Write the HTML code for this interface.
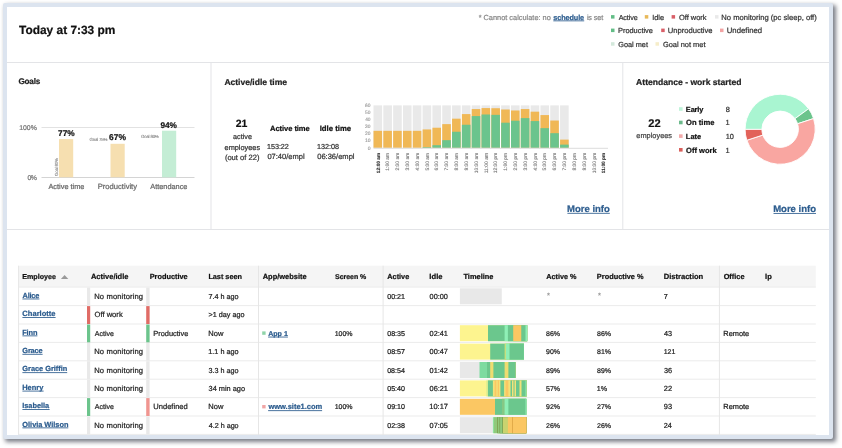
<!DOCTYPE html>
<html><head><meta charset="utf-8"><title>Dashboard</title>
<style>
html,body{margin:0;padding:0;background:#fff;}
body{width:842px;height:448px;overflow:hidden;position:relative;font-family:"Liberation Sans", sans-serif;}
#frame{position:absolute;left:3px;top:3px;width:822px;height:428px;border:4px solid #dce4ef;border-radius:2px;background:#fff;box-shadow:2.5px 2.5px 4px 0 rgba(30,35,50,0.58);}
#c{position:absolute;left:0;top:0;width:833px;height:435px;overflow:hidden;}
#c div,#c svg{position:absolute;}
#s{left:0;top:0;width:842px;height:448px;}
#t{will-change:transform;left:0;top:0;width:842px;height:448px;font-family:"Liberation Sans", sans-serif;text-rendering:geometricPrecision;}
#t text{white-space:pre;}
</style></head><body>
<div id="frame"></div>
<div id="c">
<svg id="s" viewBox="0 0 842 448">
<rect x="611.00" y="15.10" width="3.50" height="3.50" fill="#62bd86"/>
<rect x="644.80" y="15.10" width="3.50" height="3.50" fill="#e8b95a"/>
<rect x="671.60" y="15.10" width="3.50" height="3.50" fill="#d95f68"/>
<rect x="715.00" y="15.10" width="3.50" height="3.50" fill="#e9e9e9"/>
<rect x="611.00" y="28.60" width="3.50" height="3.50" fill="#62bd86"/>
<rect x="661.20" y="28.60" width="3.50" height="3.50" fill="#d95f68"/>
<rect x="720.00" y="28.60" width="3.50" height="3.50" fill="#f2a3a3"/>
<rect x="611.00" y="42.20" width="3.50" height="3.50" fill="#d3e8db"/>
<rect x="655.50" y="42.20" width="3.50" height="3.50" fill="#f6edc9"/>
<rect x="7.00" y="62.00" width="822.00" height="1.00" fill="#e3e4e7"/>
<rect x="7.00" y="229.00" width="822.00" height="1.00" fill="#e3e4e7"/>
<rect x="210.50" y="62.00" width="1.00" height="167.00" fill="#e3e4e7"/>
<rect x="622.30" y="62.00" width="1.00" height="167.00" fill="#e3e4e7"/>
<rect x="41.50" y="127.00" width="153.00" height="1.00" fill="#e2e2e2"/>
<rect x="41.50" y="177.00" width="153.00" height="1.00" fill="#d4d4d4"/>
<rect x="59.00" y="139.10" width="14.20" height="38.20" fill="#f6dfb0"/>
<rect x="110.50" y="143.80" width="14.20" height="33.50" fill="#f6dfb0"/>
<rect x="162.00" y="130.70" width="14.20" height="46.60" fill="#c4edd5"/>
<rect x="373.50" y="105.38" width="8.60" height="42.42" fill="#e9e9e9"/>
<rect x="373.50" y="130.83" width="8.60" height="16.97" fill="#f0b856"/>
<rect x="383.32" y="105.38" width="8.60" height="42.42" fill="#e9e9e9"/>
<rect x="383.32" y="130.83" width="8.60" height="16.97" fill="#f0b856"/>
<rect x="393.14" y="105.38" width="8.60" height="42.42" fill="#e9e9e9"/>
<rect x="393.14" y="130.83" width="8.60" height="16.97" fill="#f0b856"/>
<rect x="402.96" y="105.38" width="8.60" height="42.42" fill="#e9e9e9"/>
<rect x="402.96" y="130.83" width="8.60" height="16.97" fill="#f0b856"/>
<rect x="412.78" y="105.38" width="8.60" height="42.42" fill="#e9e9e9"/>
<rect x="412.78" y="130.83" width="8.60" height="16.97" fill="#f0b856"/>
<rect x="422.60" y="105.38" width="8.60" height="42.42" fill="#e9e9e9"/>
<rect x="422.60" y="129.42" width="8.60" height="18.38" fill="#f0b856"/>
<rect x="422.60" y="147.09" width="8.60" height="0.71" fill="#6bc48d"/>
<rect x="432.42" y="105.38" width="8.60" height="42.42" fill="#e9e9e9"/>
<rect x="432.42" y="127.72" width="8.60" height="20.08" fill="#f0b856"/>
<rect x="432.42" y="145.18" width="8.60" height="2.62" fill="#6bc48d"/>
<rect x="442.24" y="105.38" width="8.60" height="42.42" fill="#e9e9e9"/>
<rect x="442.24" y="124.12" width="8.60" height="23.68" fill="#f0b856"/>
<rect x="442.24" y="140.16" width="8.60" height="7.64" fill="#6bc48d"/>
<rect x="452.06" y="105.38" width="8.60" height="42.42" fill="#e9e9e9"/>
<rect x="452.06" y="118.67" width="8.60" height="29.13" fill="#f0b856"/>
<rect x="452.06" y="131.75" width="8.60" height="16.05" fill="#6bc48d"/>
<rect x="461.88" y="105.38" width="8.60" height="42.42" fill="#e9e9e9"/>
<rect x="461.88" y="114.08" width="8.60" height="33.72" fill="#f0b856"/>
<rect x="461.88" y="124.75" width="8.60" height="23.05" fill="#6bc48d"/>
<rect x="471.70" y="105.38" width="8.60" height="42.42" fill="#e9e9e9"/>
<rect x="471.70" y="109.06" width="8.60" height="38.74" fill="#f0b856"/>
<rect x="471.70" y="116.06" width="8.60" height="31.74" fill="#6bc48d"/>
<rect x="481.52" y="105.38" width="8.60" height="42.42" fill="#e9e9e9"/>
<rect x="481.52" y="108.07" width="8.60" height="39.73" fill="#f0b856"/>
<rect x="481.52" y="114.50" width="8.60" height="33.30" fill="#6bc48d"/>
<rect x="491.34" y="105.38" width="8.60" height="42.42" fill="#e9e9e9"/>
<rect x="491.34" y="108.21" width="8.60" height="39.59" fill="#f0b856"/>
<rect x="491.34" y="114.85" width="8.60" height="32.95" fill="#6bc48d"/>
<rect x="501.16" y="105.38" width="8.60" height="42.42" fill="#e9e9e9"/>
<rect x="501.16" y="109.48" width="8.60" height="38.32" fill="#f0b856"/>
<rect x="501.16" y="122.70" width="8.60" height="25.10" fill="#6bc48d"/>
<rect x="510.98" y="105.38" width="8.60" height="42.42" fill="#e9e9e9"/>
<rect x="510.98" y="110.47" width="8.60" height="37.33" fill="#f0b856"/>
<rect x="510.98" y="120.72" width="8.60" height="27.08" fill="#6bc48d"/>
<rect x="520.80" y="105.38" width="8.60" height="42.42" fill="#e9e9e9"/>
<rect x="520.80" y="109.06" width="8.60" height="38.74" fill="#f0b856"/>
<rect x="520.80" y="118.11" width="8.60" height="29.69" fill="#6bc48d"/>
<rect x="530.62" y="105.38" width="8.60" height="42.42" fill="#e9e9e9"/>
<rect x="530.62" y="111.67" width="8.60" height="36.13" fill="#f0b856"/>
<rect x="530.62" y="121.08" width="8.60" height="26.72" fill="#6bc48d"/>
<rect x="540.44" y="105.38" width="8.60" height="42.42" fill="#e9e9e9"/>
<rect x="540.44" y="115.07" width="8.60" height="32.73" fill="#f0b856"/>
<rect x="540.44" y="128.15" width="8.60" height="19.65" fill="#6bc48d"/>
<rect x="550.26" y="105.38" width="8.60" height="42.42" fill="#e9e9e9"/>
<rect x="550.26" y="120.51" width="8.60" height="27.29" fill="#f0b856"/>
<rect x="550.26" y="133.17" width="8.60" height="14.63" fill="#6bc48d"/>
<rect x="560.08" y="105.38" width="8.60" height="42.42" fill="#e9e9e9"/>
<rect x="560.08" y="139.60" width="8.60" height="8.20" fill="#f0b856"/>
<rect x="560.08" y="144.62" width="8.60" height="3.18" fill="#6bc48d"/>
<rect x="373.50" y="147.80" width="234.50" height="1.00" fill="#dcdcdc"/>
<rect x="679.00" y="107.20" width="3.60" height="3.60" fill="#bff3d9"/>
<rect x="679.00" y="120.70" width="3.60" height="3.60" fill="#6cba8c"/>
<rect x="679.00" y="134.30" width="3.60" height="3.60" fill="#f3aaaa"/>
<rect x="679.00" y="148.00" width="3.60" height="3.60" fill="#d9605c"/>
<path d="M745.10 129.40A35.1 35.1 0 0 1 808.60 108.77L795.01 118.64A18.3 18.3 0 0 0 761.90 129.40Z" fill="#a9f5d1" stroke="#fff" stroke-width="0.9"/><path d="M808.60 108.77A35.1 35.1 0 0 1 813.58 118.55L797.60 123.74A18.3 18.3 0 0 0 795.01 118.64Z" fill="#6cc48c" stroke="#fff" stroke-width="0.9"/><path d="M813.58 118.55A35.1 35.1 0 0 1 746.82 140.25L762.80 135.06A18.3 18.3 0 0 0 797.60 123.74Z" fill="#f9a6a1" stroke="#fff" stroke-width="0.9"/><path d="M746.82 140.25A35.1 35.1 0 0 1 745.10 129.40L761.90 129.40A18.3 18.3 0 0 0 762.80 135.06Z" fill="#e2625a" stroke="#fff" stroke-width="0.9"/>
<rect x="18.60" y="265.70" width="797.20" height="21.40" fill="#f5f5f5"/>
<rect x="18.60" y="286.60" width="797.20" height="1.00" fill="#ebebeb"/>
<rect x="18.60" y="305.10" width="797.20" height="1.00" fill="#ebebeb"/>
<rect x="18.60" y="323.50" width="797.20" height="1.00" fill="#ebebeb"/>
<rect x="18.60" y="341.90" width="797.20" height="1.00" fill="#ebebeb"/>
<rect x="18.60" y="360.30" width="797.20" height="1.00" fill="#ebebeb"/>
<rect x="18.60" y="378.70" width="797.20" height="1.00" fill="#ebebeb"/>
<rect x="18.60" y="397.10" width="797.20" height="1.00" fill="#ebebeb"/>
<rect x="18.60" y="415.50" width="797.20" height="1.00" fill="#ebebeb"/>
<rect x="18.60" y="433.90" width="797.20" height="1.00" fill="#ebebeb"/>
<rect x="18.10" y="265.70" width="1.00" height="170.00" fill="#e6e6e6"/>
<rect x="258.00" y="265.70" width="1.00" height="170.00" fill="#e6e6e6"/>
<rect x="382.60" y="265.70" width="1.00" height="170.00" fill="#e6e6e6"/>
<rect x="718.90" y="265.70" width="1.00" height="170.00" fill="#e6e6e6"/>
<path d="M60.9 278.9L64.6 274.9L68.3 278.9Z" fill="#9a9a9a"/>
<rect x="87.00" y="287.60" width="3.20" height="18.00" fill="#e9e9e9"/>
<rect x="146.20" y="287.60" width="3.40" height="18.00" fill="#e9e9e9"/>
<rect x="459.90" y="288.30" width="41.85" height="16.00" fill="#e8e8e8"/>
<rect x="87.00" y="306.10" width="3.20" height="17.90" fill="#e06c66"/>
<rect x="146.20" y="306.10" width="3.40" height="17.90" fill="#e06c66"/>
<rect x="87.00" y="324.50" width="3.20" height="17.90" fill="#6cc48c"/>
<rect x="146.20" y="324.50" width="3.40" height="17.90" fill="#6cc48c"/>
<rect x="262.20" y="331.40" width="3.40" height="3.40" fill="#8fd4a8"/>
<rect x="459.90" y="325.20" width="67.30" height="16.00" fill="#fdf48f"/>
<rect x="488.00" y="325.20" width="39.20" height="16.00" fill="#6bc78d"/>
<rect x="504.60" y="325.20" width="22.60" height="16.00" fill="#8ff0b6"/>
<rect x="507.90" y="325.20" width="19.30" height="16.00" fill="#6bc78d"/>
<rect x="513.20" y="325.20" width="14.00" height="16.00" fill="#fbc763"/>
<rect x="521.25" y="325.20" width="5.95" height="16.00" fill="#6bc78d"/>
<rect x="525.50" y="325.20" width="1.70" height="16.00" fill="#8ff0b6"/>
<rect x="87.00" y="342.90" width="3.20" height="17.90" fill="#e9e9e9"/>
<rect x="146.20" y="342.90" width="3.40" height="17.90" fill="#e9e9e9"/>
<rect x="459.90" y="343.60" width="64.00" height="16.00" fill="#fdf48f"/>
<rect x="490.20" y="343.60" width="33.70" height="16.00" fill="#6bc78d"/>
<rect x="504.60" y="343.60" width="19.30" height="16.00" fill="#c5e07e"/>
<rect x="506.00" y="343.60" width="17.90" height="16.00" fill="#8ff0b6"/>
<rect x="509.50" y="343.60" width="14.40" height="16.00" fill="#6bc78d"/>
<rect x="87.00" y="361.30" width="3.20" height="17.90" fill="#e9e9e9"/>
<rect x="146.20" y="361.30" width="3.40" height="17.90" fill="#e9e9e9"/>
<rect x="459.90" y="362.00" width="55.70" height="16.00" fill="#e8e8e8"/>
<rect x="479.50" y="362.00" width="36.10" height="16.00" fill="#7ddba0"/>
<rect x="487.00" y="362.00" width="28.60" height="16.00" fill="#6bc78d"/>
<rect x="490.20" y="362.00" width="25.40" height="16.00" fill="#f0dc70"/>
<rect x="493.40" y="362.00" width="22.20" height="16.00" fill="#6bc78d"/>
<rect x="504.60" y="362.00" width="11.00" height="16.00" fill="#f0dc70"/>
<rect x="508.40" y="362.00" width="7.20" height="16.00" fill="#6bc78d"/>
<rect x="87.00" y="379.70" width="3.20" height="17.90" fill="#e9e9e9"/>
<rect x="146.20" y="379.70" width="3.40" height="17.90" fill="#e9e9e9"/>
<rect x="459.90" y="380.40" width="66.40" height="16.00" fill="#fdf48f"/>
<rect x="486.40" y="380.40" width="39.90" height="16.00" fill="#d8ec90"/>
<rect x="488.00" y="380.40" width="38.30" height="16.00" fill="#6bc78d"/>
<rect x="492.90" y="380.40" width="33.40" height="16.00" fill="#f3e27a"/>
<rect x="494.60" y="380.40" width="31.70" height="16.00" fill="#fbc763"/>
<rect x="496.30" y="380.40" width="30.00" height="16.00" fill="#f3e27a"/>
<rect x="497.70" y="380.40" width="28.60" height="16.00" fill="#fbc763"/>
<rect x="499.00" y="380.40" width="27.30" height="16.00" fill="#f3e27a"/>
<rect x="500.40" y="380.40" width="25.90" height="16.00" fill="#6bc78d"/>
<rect x="504.10" y="380.40" width="22.20" height="16.00" fill="#f3e27a"/>
<rect x="505.50" y="380.40" width="20.80" height="16.00" fill="#fbc763"/>
<rect x="508.40" y="380.40" width="17.90" height="16.00" fill="#f3e27a"/>
<rect x="510.50" y="380.40" width="15.80" height="16.00" fill="#6bc78d"/>
<rect x="512.00" y="380.40" width="14.30" height="16.00" fill="#f3e27a"/>
<rect x="513.50" y="380.40" width="12.80" height="16.00" fill="#6bc78d"/>
<rect x="514.50" y="380.40" width="11.80" height="16.00" fill="#f3e27a"/>
<rect x="516.00" y="380.40" width="10.30" height="16.00" fill="#6bc78d"/>
<rect x="519.50" y="380.40" width="6.80" height="16.00" fill="#f3e27a"/>
<rect x="521.50" y="380.40" width="4.80" height="16.00" fill="#6bc78d"/>
<rect x="525.50" y="380.40" width="0.80" height="16.00" fill="#8ff0b6"/>
<rect x="87.00" y="398.10" width="3.20" height="17.90" fill="#6cc48c"/>
<rect x="146.20" y="398.10" width="3.40" height="17.90" fill="#f09590"/>
<rect x="262.20" y="405.00" width="3.40" height="3.40" fill="#f0a5a5"/>
<rect x="459.90" y="398.80" width="66.40" height="16.00" fill="#fbc763"/>
<rect x="495.00" y="398.80" width="31.30" height="16.00" fill="#6bc78d"/>
<rect x="502.00" y="398.80" width="24.30" height="16.00" fill="#86c884"/>
<rect x="504.60" y="398.80" width="21.70" height="16.00" fill="#8ff0b6"/>
<rect x="508.40" y="398.80" width="17.90" height="16.00" fill="#6bc78d"/>
<rect x="525.50" y="398.80" width="0.80" height="16.00" fill="#8ff0b6"/>
<rect x="87.00" y="416.50" width="3.20" height="17.90" fill="#e9e9e9"/>
<rect x="146.20" y="416.50" width="3.40" height="17.90" fill="#e9e9e9"/>
<rect x="459.90" y="417.20" width="66.40" height="16.00" fill="#e8e8e8"/>
<rect x="492.90" y="417.20" width="33.40" height="16.00" fill="#8ff0b6"/>
<rect x="493.60" y="417.20" width="32.70" height="16.00" fill="#8fc97b"/>
<rect x="497.10" y="417.20" width="29.20" height="16.00" fill="#7a9a4a"/>
<rect x="497.80" y="417.20" width="28.50" height="16.00" fill="#8fc97b"/>
<rect x="499.50" y="417.20" width="26.80" height="16.00" fill="#7a9a4a"/>
<rect x="500.10" y="417.20" width="26.20" height="16.00" fill="#8fc97b"/>
<rect x="502.30" y="417.20" width="24.00" height="16.00" fill="#7a9a4a"/>
<rect x="503.00" y="417.20" width="23.30" height="16.00" fill="#c9d36f"/>
<rect x="507.90" y="417.20" width="18.40" height="16.00" fill="#fbc763"/>
<rect x="512.10" y="417.20" width="14.20" height="16.00" fill="#d9a040"/>
<rect x="512.80" y="417.20" width="13.50" height="16.00" fill="#fbc763"/>
</svg>
<svg id="t" viewBox="0 0 842 448">
<text x="19.03" y="34.30" font-size="11.91" fill="#111" letter-spacing="0.001" font-weight="700" stroke="#111" stroke-width="0.22">Today at 7:33 pm</text>
<text x="478.64" y="19.60" font-size="7.38" fill="#888" stroke="#888" stroke-width="0.22">* Cannot calculate: no</text>
<text x="553.29" y="19.60" font-size="7.29" fill="#2c5c8e" letter-spacing="-0.103" font-weight="700" stroke="#2c5c8e" stroke-width="0.22">schedule</text>
<rect x="553.30" y="20.43" width="30.90" height="0.85" fill="#2c5c8e"/>
<text x="586.88" y="19.60" font-size="7.29" fill="#888" letter-spacing="-0.144" stroke="#888" stroke-width="0.22">is set</text>
<text x="618.65" y="19.50" font-size="7.19" fill="#333" letter-spacing="-0.117" stroke="#333" stroke-width="0.22">Active</text>
<text x="652.19" y="19.50" font-size="7.36" fill="#333" stroke="#333" stroke-width="0.22">Idle</text>
<text x="678.91" y="19.50" font-size="7.48" fill="#333" letter-spacing="-0.002" stroke="#333" stroke-width="0.22">Off work</text>
<text x="721.34" y="19.50" font-size="7.61" fill="#333" stroke="#333" stroke-width="0.22">No monitoring (pc sleep, off)</text>
<text x="618.06" y="33.00" font-size="7.39" fill="#333" letter-spacing="-0.002" stroke="#333" stroke-width="0.22">Productive</text>
<text x="667.68" y="33.00" font-size="7.64" fill="#333" letter-spacing="-0.003" stroke="#333" stroke-width="0.22">Unproductive</text>
<text x="726.77" y="33.00" font-size="7.76" fill="#333" letter-spacing="-0.003" stroke="#333" stroke-width="0.22">Undefined</text>
<text x="618.28" y="46.60" font-size="7.32" fill="#333" letter-spacing="-0.002" stroke="#333" stroke-width="0.22">Goal met</text>
<text x="662.88" y="46.60" font-size="7.44" fill="#333" stroke="#333" stroke-width="0.22">Goal not met</text>
<text x="18.42" y="84.40" font-size="8.18" fill="#222" letter-spacing="-0.202" font-weight="700" stroke="#222" stroke-width="0.22">Goals</text>
<text x="19.33" y="129.60" font-size="6.89" fill="#777" letter-spacing="-0.057" stroke="#777" stroke-width="0.22">100%</text>
<text x="27.46" y="180.00" font-size="6.89" fill="#777" letter-spacing="-0.482" stroke="#777" stroke-width="0.22">0%</text>
<text x="58.12" y="135.70" font-size="8.31" fill="#111" font-weight="700" stroke="#111" stroke-width="0.22">77%</text>
<text x="109.05" y="140.30" font-size="8.45" fill="#111" letter-spacing="0.094" font-weight="700" stroke="#111" stroke-width="0.22">67%</text>
<text x="160.40" y="127.50" font-size="8.27" fill="#111" letter-spacing="-0.002" font-weight="700" stroke="#111" stroke-width="0.22">94%</text>
<text x="89.43" y="141.20" font-size="4.43" fill="#888" letter-spacing="-0.183" stroke="#888" stroke-width="0.12">Goal 75%</text>
<text x="140.93" y="137.80" font-size="4.43" fill="#888" letter-spacing="-0.212" stroke="#888" stroke-width="0.12">Goal 80%</text>
<text transform="translate(58.20 175.75) rotate(-90)" x="-0.22" y="0" font-size="4.43" fill="#888" letter-spacing="-0.226" stroke="#888" stroke-width="0.12">Goal 80%</text>
<text x="48.45" y="188.90" font-size="7.39" fill="#666" letter-spacing="-0.003" stroke="#666" stroke-width="0.22">Active time</text>
<text x="97.74" y="188.90" font-size="7.61" fill="#666" letter-spacing="-0.002" stroke="#666" stroke-width="0.22">Productivity</text>
<text x="150.25" y="188.90" font-size="7.39" fill="#666" letter-spacing="-0.010" stroke="#666" stroke-width="0.22">Attendance</text>
<text x="224.38" y="84.50" font-size="8.54" fill="#222" font-weight="700" stroke="#222" stroke-width="0.22">Active/idle time</text>
<text x="235.73" y="126.90" font-size="10.51" fill="#111" font-weight="700" stroke="#111" stroke-width="0.22">21</text>
<text x="233.06" y="138.50" font-size="7.23" fill="#333" stroke="#333" stroke-width="0.22">active</text>
<text x="224.56" y="149.50" font-size="7.37" fill="#333" letter-spacing="0.001" stroke="#333" stroke-width="0.22">employees</text>
<text x="224.89" y="160.20" font-size="7.59" fill="#333" stroke="#333" stroke-width="0.22">(out of 22)</text>
<text x="270.10" y="131.40" font-size="7.58" fill="#111" letter-spacing="-0.080" font-weight="700" stroke="#111" stroke-width="0.22">Active time</text>
<text x="319.65" y="131.40" font-size="7.75" fill="#111" font-weight="700" stroke="#111" stroke-width="0.22">Idle time</text>
<text x="267.11" y="148.70" font-size="7.19" fill="#333" letter-spacing="-0.064" stroke="#333" stroke-width="0.22">153:22</text>
<text x="316.90" y="148.70" font-size="7.27" fill="#333" letter-spacing="0.002" stroke="#333" stroke-width="0.22">132:08</text>
<text x="267.39" y="159.40" font-size="7.52" fill="#333" letter-spacing="0.003" stroke="#333" stroke-width="0.22">07:40/empl</text>
<text x="317.19" y="159.40" font-size="7.55" fill="#333" letter-spacing="-0.002" stroke="#333" stroke-width="0.22">06:36/empl</text>
<text x="367.76" y="149.50" font-size="5.0" fill="#999" stroke="#999" stroke-width="0.12">0</text>
<text x="364.88" y="142.43" font-size="4.99" fill="#999" letter-spacing="0.004" stroke="#999" stroke-width="0.12">10</text>
<text x="365.01" y="135.36" font-size="4.87" fill="#999" letter-spacing="0.003" stroke="#999" stroke-width="0.12">20</text>
<text x="365.08" y="128.29" font-size="4.83" fill="#999" letter-spacing="-0.029" stroke="#999" stroke-width="0.12">30</text>
<text x="365.15" y="121.22" font-size="4.83" fill="#999" letter-spacing="-0.101" stroke="#999" stroke-width="0.12">40</text>
<text x="365.06" y="114.15" font-size="4.83" fill="#999" letter-spacing="-0.005" stroke="#999" stroke-width="0.12">50</text>
<text x="365.01" y="107.08" font-size="4.87" fill="#999" letter-spacing="0.003" stroke="#999" stroke-width="0.12">60</text>
<text transform="translate(379.50 172.95) rotate(-90)" x="-0.29" y="0" font-size="4.83" fill="#333" letter-spacing="-0.029" font-weight="700" stroke="#333" stroke-width="0.12">12:00 am</text>
<text transform="translate(389.32 170.35) rotate(-90)" x="-0.37" y="0" font-size="4.98" fill="#777" letter-spacing="-0.001" stroke="#777" stroke-width="0.12">1:00 am</text>
<text transform="translate(399.14 170.35) rotate(-90)" x="-0.25" y="0" font-size="4.94" fill="#777" letter-spacing="0.001" stroke="#777" stroke-width="0.12">2:00 am</text>
<text transform="translate(408.96 170.35) rotate(-90)" x="-0.17" y="0" font-size="4.92" fill="#777" stroke="#777" stroke-width="0.12">3:00 am</text>
<text transform="translate(418.78 170.35) rotate(-90)" x="-0.10" y="0" font-size="4.9" fill="#777" stroke="#777" stroke-width="0.12">4:00 am</text>
<text transform="translate(428.60 170.35) rotate(-90)" x="-0.20" y="0" font-size="4.93" fill="#777" stroke="#777" stroke-width="0.12">5:00 am</text>
<text transform="translate(438.42 170.35) rotate(-90)" x="-0.25" y="0" font-size="4.94" fill="#777" letter-spacing="0.001" stroke="#777" stroke-width="0.12">6:00 am</text>
<text transform="translate(448.24 170.35) rotate(-90)" x="-0.25" y="0" font-size="4.94" fill="#777" letter-spacing="0.001" stroke="#777" stroke-width="0.12">7:00 am</text>
<text transform="translate(458.06 170.35) rotate(-90)" x="-0.20" y="0" font-size="4.93" fill="#777" stroke="#777" stroke-width="0.12">8:00 am</text>
<text transform="translate(467.88 170.35) rotate(-90)" x="-0.22" y="0" font-size="4.94" fill="#777" letter-spacing="-0.003" stroke="#777" stroke-width="0.12">9:00 am</text>
<text transform="translate(477.70 172.95) rotate(-90)" x="-0.37" y="0" font-size="4.94" fill="#777" letter-spacing="-0.002" stroke="#777" stroke-width="0.12">10:00 am</text>
<text transform="translate(487.52 172.95) rotate(-90)" x="-0.38" y="0" font-size="5.03" fill="#777" stroke="#777" stroke-width="0.12">11:00 am</text>
<text transform="translate(497.34 172.95) rotate(-90)" x="-0.37" y="0" font-size="4.94" fill="#777" letter-spacing="-0.002" stroke="#777" stroke-width="0.12">12:00 pm</text>
<text transform="translate(507.16 170.35) rotate(-90)" x="-0.37" y="0" font-size="4.98" fill="#777" letter-spacing="-0.001" stroke="#777" stroke-width="0.12">1:00 pm</text>
<text transform="translate(516.98 170.35) rotate(-90)" x="-0.25" y="0" font-size="4.94" fill="#777" letter-spacing="0.001" stroke="#777" stroke-width="0.12">2:00 pm</text>
<text transform="translate(526.80 170.35) rotate(-90)" x="-0.17" y="0" font-size="4.92" fill="#777" stroke="#777" stroke-width="0.12">3:00 pm</text>
<text transform="translate(536.62 170.35) rotate(-90)" x="-0.10" y="0" font-size="4.9" fill="#777" stroke="#777" stroke-width="0.12">4:00 pm</text>
<text transform="translate(546.44 170.35) rotate(-90)" x="-0.20" y="0" font-size="4.93" fill="#777" stroke="#777" stroke-width="0.12">5:00 pm</text>
<text transform="translate(556.26 170.35) rotate(-90)" x="-0.25" y="0" font-size="4.94" fill="#777" letter-spacing="0.001" stroke="#777" stroke-width="0.12">6:00 pm</text>
<text transform="translate(566.08 170.35) rotate(-90)" x="-0.25" y="0" font-size="4.94" fill="#777" letter-spacing="0.001" stroke="#777" stroke-width="0.12">7:00 pm</text>
<text transform="translate(575.90 170.35) rotate(-90)" x="-0.20" y="0" font-size="4.93" fill="#777" stroke="#777" stroke-width="0.12">8:00 pm</text>
<text transform="translate(585.72 170.35) rotate(-90)" x="-0.22" y="0" font-size="4.94" fill="#777" letter-spacing="-0.003" stroke="#777" stroke-width="0.12">9:00 pm</text>
<text transform="translate(595.54 172.95) rotate(-90)" x="-0.37" y="0" font-size="4.94" fill="#777" letter-spacing="-0.002" stroke="#777" stroke-width="0.12">10:00 pm</text>
<text transform="translate(605.36 172.95) rotate(-90)" x="-0.29" y="0" font-size="4.83" fill="#333" letter-spacing="-0.028" font-weight="700" stroke="#333" stroke-width="0.12">11:00 pm</text>
<text x="567.03" y="211.80" font-size="9.53" fill="#2c5c8e" letter-spacing="-0.002" font-weight="700" stroke="#2c5c8e" stroke-width="0.22">More info</text>
<rect x="567.40" y="212.85" width="42.40" height="0.85" fill="#2c5c8e"/>
<text x="636.08" y="84.80" font-size="8.58" fill="#222" letter-spacing="-0.001" font-weight="700" stroke="#222" stroke-width="0.22">Attendance - work started</text>
<text x="648.22" y="126.80" font-size="11.09" fill="#111" letter-spacing="-0.002" font-weight="700" stroke="#111" stroke-width="0.22">22</text>
<text x="636.35" y="138.30" font-size="7.39" fill="#444" letter-spacing="0.002" stroke="#444" stroke-width="0.22">employees</text>
<text x="685.87" y="111.90" font-size="7.39" fill="#111" letter-spacing="-0.147" font-weight="700" stroke="#111" stroke-width="0.22">Early</text>
<text x="725.78" y="111.90" font-size="7.45" fill="#333" stroke="#333" stroke-width="0.22">8</text>
<text x="686.05" y="125.40" font-size="7.61" fill="#111" letter-spacing="0.002" font-weight="700" stroke="#111" stroke-width="0.22">On time</text>
<text x="725.42" y="125.40" font-size="7.45" fill="#333" stroke="#333" stroke-width="0.22">1</text>
<text x="685.87" y="139.00" font-size="7.45" fill="#111" font-weight="700" stroke="#111" stroke-width="0.22">Late</text>
<text x="725.70" y="139.00" font-size="7.39" fill="#333" letter-spacing="0.001" stroke="#333" stroke-width="0.22">10</text>
<text x="686.05" y="152.70" font-size="7.56" fill="#111" letter-spacing="0.002" font-weight="700" stroke="#111" stroke-width="0.22">Off work</text>
<text x="725.42" y="152.70" font-size="7.45" fill="#333" stroke="#333" stroke-width="0.22">1</text>
<text x="773.13" y="211.90" font-size="9.55" fill="#2c5c8e" font-weight="700" stroke="#2c5c8e" stroke-width="0.22">More info</text>
<rect x="773.50" y="212.96" width="42.50" height="0.85" fill="#2c5c8e"/>
<text x="22.19" y="279.30" font-size="7.15" fill="#111" letter-spacing="0.001" font-weight="700" stroke="#111" stroke-width="0.22">Employee</text>
<text x="90.90" y="279.30" font-size="7.51" fill="#111" letter-spacing="0.002" font-weight="700" stroke="#111" stroke-width="0.22">Active/idle</text>
<text x="149.67" y="279.30" font-size="7.37" fill="#111" letter-spacing="0.002" font-weight="700" stroke="#111" stroke-width="0.22">Productive</text>
<text x="208.38" y="279.30" font-size="7.29" fill="#111" letter-spacing="-0.002" font-weight="700" stroke="#111" stroke-width="0.22">Last seen</text>
<text x="262.70" y="279.30" font-size="7.47" fill="#111" letter-spacing="-0.001" font-weight="700" stroke="#111" stroke-width="0.22">App/website</text>
<text x="335.08" y="279.30" font-size="6.99" fill="#111" letter-spacing="-0.033" font-weight="700" stroke="#111" stroke-width="0.22">Screen %</text>
<text x="387.30" y="279.30" font-size="7.32" fill="#111" font-weight="700" stroke="#111" stroke-width="0.22">Active</text>
<text x="429.36" y="279.30" font-size="7.6" fill="#111" letter-spacing="0.013" font-weight="700" stroke="#111" stroke-width="0.22">Idle</text>
<text x="463.48" y="279.30" font-size="7.43" fill="#111" font-weight="700" stroke="#111" stroke-width="0.22">Timeline</text>
<text x="546.21" y="279.30" font-size="7.25" fill="#111" font-weight="700" stroke="#111" stroke-width="0.22">Active %</text>
<text x="596.87" y="279.30" font-size="7.36" fill="#111" letter-spacing="0.003" font-weight="700" stroke="#111" stroke-width="0.22">Productive %</text>
<text x="663.66" y="279.30" font-size="7.59" fill="#111" letter-spacing="0.001" font-weight="700" stroke="#111" stroke-width="0.22">Distraction</text>
<text x="723.66" y="279.30" font-size="7.35" fill="#111" letter-spacing="-0.001" font-weight="700" stroke="#111" stroke-width="0.22">Office</text>
<text x="765.06" y="279.30" font-size="7.54" fill="#111" letter-spacing="-0.003" font-weight="700" stroke="#111" stroke-width="0.22">Ip</text>
<text x="22.50" y="297.70" font-size="7.39" fill="#2c5c8e" letter-spacing="-0.196" font-weight="700" stroke="#2c5c8e" stroke-width="0.22">Alice</text>
<rect x="22.40" y="298.54" width="17.00" height="0.85" fill="#2c5c8e"/>
<text x="94.24" y="298.90" font-size="7.6" fill="#222" letter-spacing="0.130" stroke="#222" stroke-width="0.22">No monitoring</text>
<text x="208.49" y="298.90" font-size="7.23" fill="#222" stroke="#222" stroke-width="0.22">7.4 h ago</text>
<text x="387.20" y="298.90" font-size="7.14" fill="#222" letter-spacing="0.003" stroke="#222" stroke-width="0.22">00:21</text>
<text x="429.59" y="298.90" font-size="7.32" fill="#222" stroke="#222" stroke-width="0.22">00:00</text>
<text x="546.91" y="298.40" font-size="7.65" fill="#999" stroke="#999" stroke-width="0.22">*</text>
<text x="597.91" y="298.40" font-size="7.65" fill="#999" stroke="#999" stroke-width="0.22">*</text>
<text x="663.72" y="298.90" font-size="7.24" fill="#222" stroke="#222" stroke-width="0.22">7</text>
<text x="22.35" y="316.20" font-size="7.57" fill="#2c5c8e" letter-spacing="0.002" font-weight="700" stroke="#2c5c8e" stroke-width="0.22">Charlotte</text>
<rect x="22.40" y="317.06" width="33.20" height="0.85" fill="#2c5c8e"/>
<text x="94.51" y="317.40" font-size="7.6" fill="#222" letter-spacing="0.007" stroke="#222" stroke-width="0.22">Off work</text>
<text x="208.53" y="317.40" font-size="7.22" fill="#222" stroke="#222" stroke-width="0.22">&gt;1 day ago</text>
<text x="22.17" y="334.60" font-size="7.39" fill="#2c5c8e" letter-spacing="-0.055" font-weight="700" stroke="#2c5c8e" stroke-width="0.22">Finn</text>
<rect x="22.40" y="335.44" width="15.00" height="0.85" fill="#2c5c8e"/>
<text x="94.85" y="335.80" font-size="7.01" fill="#222" stroke="#222" stroke-width="0.22">Active</text>
<text x="153.26" y="335.80" font-size="7.43" fill="#222" stroke="#222" stroke-width="0.22">Productive</text>
<text x="208.25" y="335.80" font-size="7.54" fill="#222" stroke="#222" stroke-width="0.22">Now</text>
<text x="268.21" y="335.80" font-size="7.07" fill="#2c5c8e" letter-spacing="-0.003" font-weight="700" stroke="#2c5c8e" stroke-width="0.22">App 1</text>
<rect x="268.10" y="336.61" width="19.80" height="0.85" fill="#2c5c8e"/>
<text x="334.73" y="335.80" font-size="6.99" fill="#222" letter-spacing="-0.005" stroke="#222" stroke-width="0.22">100%</text>
<text x="387.20" y="335.80" font-size="7.13" fill="#222" stroke="#222" stroke-width="0.22">08:35</text>
<text x="429.59" y="335.80" font-size="7.35" fill="#222" stroke="#222" stroke-width="0.22">02:41</text>
<text x="546.07" y="335.80" font-size="6.99" fill="#222" letter-spacing="-0.036" stroke="#222" stroke-width="0.22">86%</text>
<text x="597.07" y="335.80" font-size="6.99" fill="#222" letter-spacing="-0.036" stroke="#222" stroke-width="0.22">86%</text>
<text x="664.01" y="335.80" font-size="7.23" fill="#222" stroke="#222" stroke-width="0.22">43</text>
<text x="723.36" y="335.80" font-size="7.4" fill="#222" letter-spacing="-0.003" stroke="#222" stroke-width="0.22">Remote</text>
<text x="22.35" y="353.00" font-size="7.39" fill="#2c5c8e" letter-spacing="-0.182" font-weight="700" stroke="#2c5c8e" stroke-width="0.22">Grace</text>
<rect x="22.40" y="353.84" width="20.20" height="0.85" fill="#2c5c8e"/>
<text x="94.24" y="354.20" font-size="7.6" fill="#222" letter-spacing="0.130" stroke="#222" stroke-width="0.22">No monitoring</text>
<text x="208.30" y="354.20" font-size="7.28" fill="#222" letter-spacing="-0.002" stroke="#222" stroke-width="0.22">1.1 h ago</text>
<text x="387.20" y="354.20" font-size="7.14" fill="#222" letter-spacing="0.003" stroke="#222" stroke-width="0.22">08:57</text>
<text x="429.59" y="354.20" font-size="7.35" fill="#222" stroke="#222" stroke-width="0.22">00:47</text>
<text x="546.04" y="354.20" font-size="6.99" fill="#222" letter-spacing="-0.018" stroke="#222" stroke-width="0.22">90%</text>
<text x="597.07" y="354.20" font-size="6.99" fill="#222" letter-spacing="-0.036" stroke="#222" stroke-width="0.22">81%</text>
<text x="663.63" y="354.20" font-size="6.99" fill="#222" letter-spacing="-0.008" stroke="#222" stroke-width="0.22">121</text>
<text x="22.35" y="371.40" font-size="7.39" fill="#2c5c8e" letter-spacing="-0.011" font-weight="700" stroke="#2c5c8e" stroke-width="0.22">Grace Griffin</text>
<rect x="22.40" y="372.24" width="44.80" height="0.85" fill="#2c5c8e"/>
<text x="94.24" y="372.60" font-size="7.6" fill="#222" letter-spacing="0.130" stroke="#222" stroke-width="0.22">No monitoring</text>
<text x="208.60" y="372.60" font-size="7.21" fill="#222" letter-spacing="-0.002" stroke="#222" stroke-width="0.22">3.3 h ago</text>
<text x="387.20" y="372.60" font-size="7.09" fill="#222" letter-spacing="-0.002" stroke="#222" stroke-width="0.22">08:54</text>
<text x="429.59" y="372.60" font-size="7.35" fill="#222" stroke="#222" stroke-width="0.22">01:42</text>
<text x="546.07" y="372.60" font-size="6.99" fill="#222" letter-spacing="-0.036" stroke="#222" stroke-width="0.22">89%</text>
<text x="597.07" y="372.60" font-size="6.99" fill="#222" letter-spacing="-0.036" stroke="#222" stroke-width="0.22">89%</text>
<text x="663.89" y="372.60" font-size="7.33" fill="#222" letter-spacing="0.005" stroke="#222" stroke-width="0.22">36</text>
<text x="22.16" y="389.80" font-size="7.48" fill="#2c5c8e" letter-spacing="-0.002" font-weight="700" stroke="#2c5c8e" stroke-width="0.22">Henry</text>
<rect x="22.40" y="390.65" width="21.20" height="0.85" fill="#2c5c8e"/>
<text x="94.24" y="391.00" font-size="7.6" fill="#222" letter-spacing="0.130" stroke="#222" stroke-width="0.22">No monitoring</text>
<text x="208.59" y="391.00" font-size="7.37" fill="#222" stroke="#222" stroke-width="0.22">34 min ago</text>
<text x="387.20" y="391.00" font-size="7.12" fill="#222" letter-spacing="-0.003" stroke="#222" stroke-width="0.22">05:40</text>
<text x="429.59" y="391.00" font-size="7.35" fill="#222" stroke="#222" stroke-width="0.22">06:21</text>
<text x="546.07" y="391.00" font-size="6.99" fill="#222" letter-spacing="-0.036" stroke="#222" stroke-width="0.22">57%</text>
<text x="596.82" y="391.00" font-size="7.11" fill="#222" stroke="#222" stroke-width="0.22">1%</text>
<text x="663.78" y="391.00" font-size="7.48" fill="#222" stroke="#222" stroke-width="0.22">22</text>
<text x="22.17" y="408.20" font-size="7.39" fill="#2c5c8e" font-weight="700" stroke="#2c5c8e" stroke-width="0.22">Isabella</text>
<rect x="22.40" y="409.04" width="27.20" height="0.85" fill="#2c5c8e"/>
<text x="94.85" y="409.40" font-size="7.01" fill="#222" stroke="#222" stroke-width="0.22">Active</text>
<text x="153.28" y="409.40" font-size="7.57" fill="#222" letter-spacing="0.002" stroke="#222" stroke-width="0.22">Undefined</text>
<text x="208.25" y="409.40" font-size="7.54" fill="#222" stroke="#222" stroke-width="0.22">Now</text>
<text x="268.39" y="409.40" font-size="7.5" fill="#2c5c8e" font-weight="700" stroke="#2c5c8e" stroke-width="0.22">www.site1.com</text>
<rect x="268.10" y="410.25" width="54.00" height="0.85" fill="#2c5c8e"/>
<text x="334.73" y="409.40" font-size="6.99" fill="#222" letter-spacing="-0.005" stroke="#222" stroke-width="0.22">100%</text>
<text x="387.20" y="409.40" font-size="7.12" fill="#222" letter-spacing="-0.003" stroke="#222" stroke-width="0.22">09:10</text>
<text x="429.29" y="409.40" font-size="7.47" fill="#222" letter-spacing="0.003" stroke="#222" stroke-width="0.22">10:17</text>
<text x="546.04" y="409.40" font-size="6.99" fill="#222" letter-spacing="-0.018" stroke="#222" stroke-width="0.22">92%</text>
<text x="597.00" y="409.40" font-size="6.99" fill="#222" stroke="#222" stroke-width="0.22">27%</text>
<text x="663.82" y="409.40" font-size="7.41" fill="#222" letter-spacing="-0.004" stroke="#222" stroke-width="0.22">93</text>
<text x="723.36" y="409.40" font-size="7.4" fill="#222" letter-spacing="-0.003" stroke="#222" stroke-width="0.22">Remote</text>
<text x="22.35" y="426.60" font-size="7.39" fill="#2c5c8e" letter-spacing="-0.016" font-weight="700" stroke="#2c5c8e" stroke-width="0.22">Olivia Wilson</text>
<rect x="22.40" y="427.44" width="45.90" height="0.85" fill="#2c5c8e"/>
<text x="94.24" y="427.80" font-size="7.6" fill="#222" letter-spacing="0.130" stroke="#222" stroke-width="0.22">No monitoring</text>
<text x="208.71" y="427.80" font-size="7.18" fill="#222" stroke="#222" stroke-width="0.22">4.2 h ago</text>
<text x="387.20" y="427.80" font-size="7.13" fill="#222" stroke="#222" stroke-width="0.22">02:38</text>
<text x="429.59" y="427.80" font-size="7.34" fill="#222" letter-spacing="-0.002" stroke="#222" stroke-width="0.22">07:05</text>
<text x="546.00" y="427.80" font-size="6.99" fill="#222" stroke="#222" stroke-width="0.22">26%</text>
<text x="597.00" y="427.80" font-size="6.99" fill="#222" stroke="#222" stroke-width="0.22">26%</text>
<text x="663.78" y="427.80" font-size="7.33" fill="#222" letter-spacing="0.005" stroke="#222" stroke-width="0.22">24</text>
</svg>
</div>
</body></html>
